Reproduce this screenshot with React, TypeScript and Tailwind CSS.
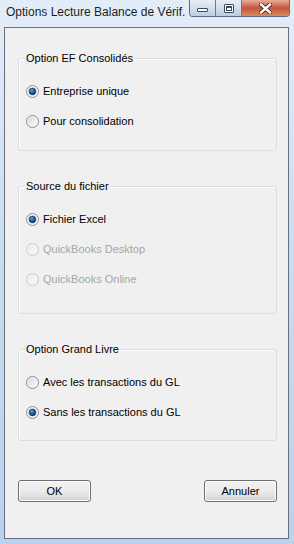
import type { ReactNode } from "react"

type RadioState = "on" | "off" | "disabled"

function RadioDot({ state }: { state: RadioState }) {
	const ring = state === "disabled" ? "#c9c9c9" : "#8c8e91"
	return (
		<svg width="13" height="13" viewBox="0 0 13 13" className="shrink-0">
			<defs>
				<linearGradient id="rfill" x1="0" y1="0" x2="1" y2="1">
					<stop offset="0" stopColor="#d6d6d6" />
					<stop offset="1" stopColor="#ffffff" />
				</linearGradient>
				<linearGradient id="rfillOff" x1="0" y1="0" x2="1" y2="1">
					<stop offset="0" stopColor="#e9e9e9" />
					<stop offset="1" stopColor="#fafafa" />
				</linearGradient>
				<radialGradient id="rdot" cx="0.4" cy="0.35" r="0.7">
					<stop offset="0" stopColor="#6fa2d6" />
					<stop offset="0.5" stopColor="#20579a" />
					<stop offset="1" stopColor="#0b3464" />
				</radialGradient>
			</defs>
			<circle cx="6.5" cy="6.5" r="6" fill="#f4f4f4" stroke={ring} strokeWidth="1" />
			<circle cx="6.5" cy="6.5" r="4.5" fill={state === "disabled" ? "url(#rfillOff)" : "url(#rfill)"} />
			{state === "on" && <circle cx="6.5" cy="6.5" r="3.4" fill="url(#rdot)" stroke="#1b3f6b" strokeWidth="0.6" />}
		</svg>
	)
}

function Radio({ label, state }: { label: string; state: RadioState }) {
	return (
		<div className="flex h-[16px] items-center gap-[4px]">
			<RadioDot state={state} />
			<span className={state === "disabled" ? "text-[#a6a6a6]" : "text-black"}>{label}</span>
		</div>
	)
}

function Group({ title, height, children }: { title: string; height: string; children: ReactNode }) {
	return (
		<div className={`relative ml-[13px] w-[259px] rounded-[3px] border border-[#d5dfe5] shadow-[inset_1px_1px_0_#ffffff] ${height}`}>
			<span className="absolute -top-[8px] left-[6px] bg-[#f0f0f0] px-[1px] leading-[14px] text-black">{title}</span>
			<div className="flex flex-col gap-[14px] pl-[7px] pt-[24px]">{children}</div>
		</div>
	)
}

function WinButton({ label }: { label: string }) {
	return (
		<button
			type="button"
			className="flex h-[22px] w-[73px] items-center justify-center rounded-[3px] border border-[#707070] bg-gradient-to-b from-[#f2f2f2] via-[#ebebeb] to-[#d4d4d4] text-black shadow-[inset_0_0_0_1px_#fcfcfc]"
		>
			{label}
		</button>
	)
}

function CaptionButtons() {
	return (
		<div className="flex h-[17px] shrink-0 overflow-hidden rounded-b-[4px] border border-t-0 border-[#5e6c82]">
			<div className="flex w-[26px] items-center justify-center border-r border-[#6d7b90] bg-gradient-to-b from-[#e8eef6] via-[#d3dded] to-[#bccbe0]">
				<div className="mt-[3px] h-[4px] w-[11px] rounded-[1px] border border-[#3d4a5c] bg-white" />
			</div>
			<div className="flex w-[26px] items-center justify-center border-r border-[#6d7b90] bg-gradient-to-b from-[#e8eef6] via-[#d3dded] to-[#bccbe0]">
				<div className="h-[9px] w-[10px] rounded-[1px] border border-[#3d4a5c] bg-white p-[1px]">
					<div className="h-full w-full border border-[#3d4a5c] border-t-2" />
				</div>
			</div>
			<div className="flex w-[47px] items-center justify-center bg-gradient-to-b from-[#e9ad98] via-[#c2553d] to-[#dd8a5e]">
				<svg width="13" height="11" viewBox="0 0 13 11">
					<path d="M2 1.5 L11 9.5 M11 1.5 L2 9.5" stroke="#4a2a22" strokeWidth="4.2" strokeLinecap="square" />
					<path d="M2 1.5 L11 9.5 M11 1.5 L2 9.5" stroke="#ffffff" strokeWidth="2.4" strokeLinecap="square" />
				</svg>
			</div>
		</div>
	)
}

export default function App() {
	return (
		<div className="flex h-[544px] w-[294px] flex-col bg-gradient-to-b from-[#e3edf8] via-[#c8dbf0] to-[#b8d2ef] font-['Liberation_Sans',Arial,sans-serif] text-[11px]">
			<div className="flex h-[27px] shrink-0 items-start justify-between pr-[4px]">
				<span className="whitespace-nowrap pl-[6px] pt-[5px] text-[12px] leading-[14px] text-[#1e1e1e]">
					Options Lecture Balance de Vérif.
				</span>
				<CaptionButtons />
			</div>
			<div className="flex min-h-0 flex-1 pb-[5px] pl-[4px] pr-[5px]">
				<div className="flex flex-1 flex-col border border-[#67707c] bg-[#f0f0f0]">
					<div className="mt-[30px]">
						<Group title="Option EF Consolidés" height="h-[93px]">
							<Radio label="Entreprise unique" state="on" />
							<Radio label="Pour consolidation" state="off" />
						</Group>
					</div>
					<div className="mt-[35px]">
						<Group title="Source du fichier" height="h-[128px]">
							<Radio label="Fichier Excel" state="on" />
							<Radio label="QuickBooks Desktop" state="disabled" />
							<Radio label="QuickBooks Online" state="disabled" />
						</Group>
					</div>
					<div className="mt-[35px]">
						<Group title="Option Grand Livre" height="h-[92px]">
							<Radio label="Avec les transactions du GL" state="off" />
							<Radio label="Sans les transactions du GL" state="on" />
						</Group>
					</div>
					<div className="ml-[13px] mt-[39px] flex w-[259px] justify-between">
						<WinButton label="OK" />
						<WinButton label="Annuler" />
					</div>
				</div>
			</div>
		</div>
	)
}
